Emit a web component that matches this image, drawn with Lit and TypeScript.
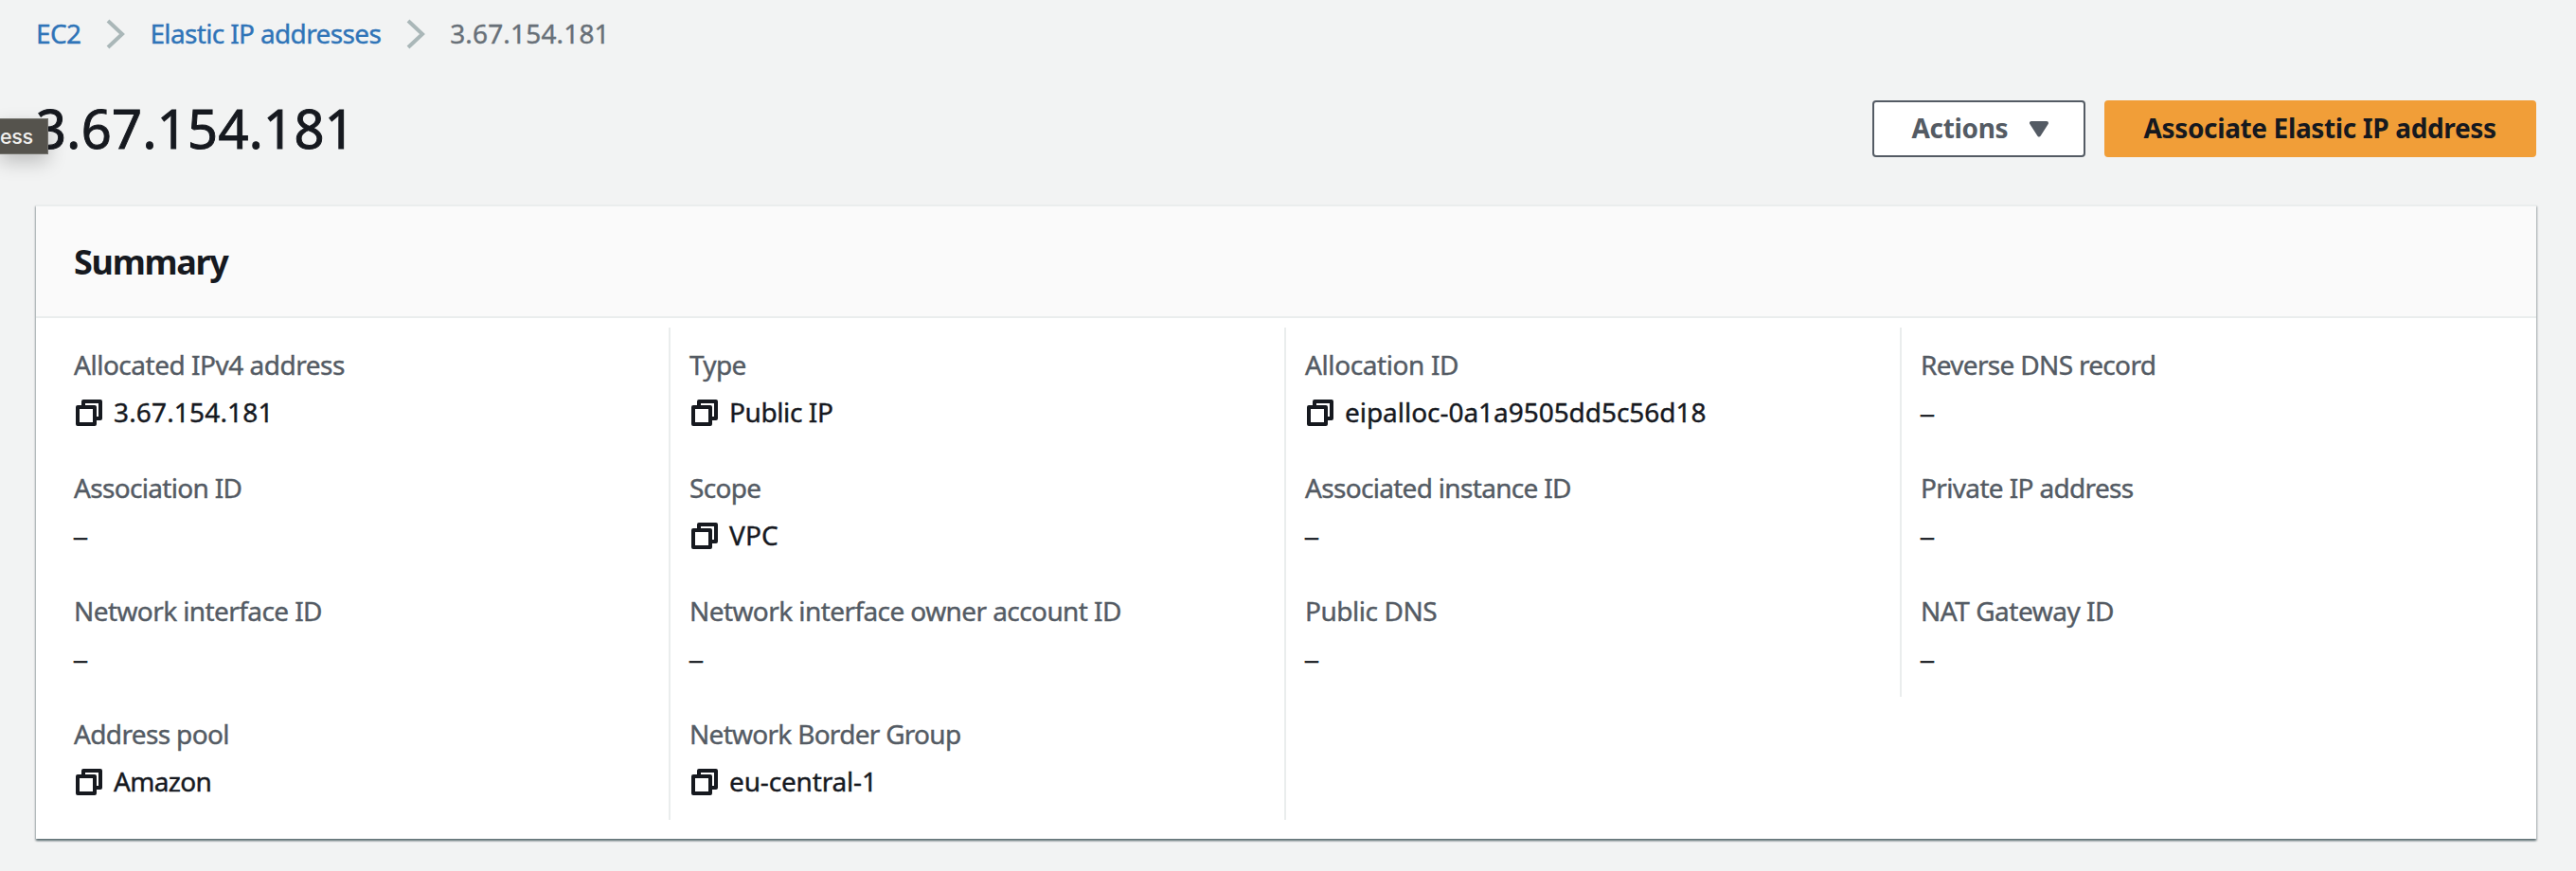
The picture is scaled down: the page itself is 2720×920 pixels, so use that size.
import { LitElement, html, svg, css, nothing } from "lit";

interface Field {
  label: string;
  labelTrack: number;
  value?: string;
  valueTrack?: number;
}

const fields: (Field | null)[] = [
  { label: "Allocated IPv4 address", labelTrack: -0.483, value: "3.67.154.181", valueTrack: 0.16 },
  { label: "Type", labelTrack: -0.669, value: "Public IP", valueTrack: -0.4 },
  { label: "Allocation ID", labelTrack: -0.398, value: "eipalloc-0a1a9505dd5c56d18", valueTrack: -0.04 },
  { label: "Reverse DNS record", labelTrack: -0.68 },
  { label: "Association ID", labelTrack: -0.68 },
  { label: "Scope", labelTrack: -0.7, value: "VPC", valueTrack: 0.13 },
  { label: "Associated instance ID", labelTrack: -0.69 },
  { label: "Private IP address", labelTrack: -0.65 },
  { label: "Network interface ID", labelTrack: -0.59 },
  { label: "Network interface owner account ID", labelTrack: -0.58 },
  { label: "Public DNS", labelTrack: -0.46 },
  { label: "NAT Gateway ID", labelTrack: -0.48 },
  { label: "Address pool", labelTrack: -0.64, value: "Amazon", valueTrack: -0.7 },
  { label: "Network Border Group", labelTrack: -0.72, value: "eu-central-1", valueTrack: -0.16 },
  null,
];

const chevron = html`<svg class="chevron" width="20" height="32" viewBox="0 0 20 32">
  ${svg`<path d="M2 2 L17 16 L2 30" fill="none" stroke="#aab7b8" stroke-width="4" />`}
</svg>`;

const copyIcon = html`<svg class="copy" width="28" height="28" viewBox="0 0 28 28">
  ${svg`<path d="M8 6 V2 H26 V20 H22" fill="none" stroke="#16191f" stroke-width="4" stroke-linejoin="round" />
  <rect x="2" y="8" width="18" height="18" fill="none" stroke="#16191f" stroke-width="4" stroke-linejoin="round" />`}
</svg>`;

class SummaryField extends LitElement {
  static properties = { field: { attribute: false } };
  declare field: Field | null;

  static styles = css`
    :host {
      display: block;
      box-sizing: border-box;
      padding: 17px 0 0 20px;
      line-height: 44px;
      -webkit-text-stroke-width: 0.4px;
    }
    .label {
      color: #545b64;
      white-space: nowrap;
    }
    .value {
      display: flex;
      align-items: center;
      margin-top: 6px;
      height: 44px;
      color: #16191f;
      white-space: nowrap;
    }
    .copy {
      display: block;
      margin: 2px 12px 0 2px;
    }
    .dash {
      padding-top: 3px;
      font-family: "Liberation Sans", sans-serif;
      font-size: 25px;
      -webkit-text-stroke-width: 0.7px;
    }
  `;

  render() {
    const f = this.field;
    if (!f) return nothing;
    return html`
      <div class="label" style="letter-spacing:${f.labelTrack}px">${f.label}</div>
      <div class="value">
        ${f.value
          ? html`${copyIcon}<span style="letter-spacing:${f.valueTrack}px">${f.value}</span>`
          : html`<span class="dash">–</span>`}
      </div>
    `;
  }
}
customElements.define("summary-field", SummaryField);

class AppRoot extends LitElement {
  static styles = css`
    :host {
      display: block;
      position: relative;
      box-sizing: border-box;
      width: 100%;
      height: 920px;
      padding: 13px 42px 0 38px;
      overflow: hidden;
      background: #f2f3f3;
      color: #16191f;
      font: 400 28px/44px "Noto Sans", sans-serif;
    }
    .breadcrumbs {
      display: flex;
      align-items: center;
      height: 46px;
      line-height: 46px;
      margin-top: -1px;
      white-space: nowrap;
      -webkit-text-stroke-width: 0.4px;
    }
    .breadcrumbs a {
      color: #2f74b8;
    }
    .chevron {
      display: block;
      margin: 2px 26.5px 0;
    }
    .crumb-root {
      letter-spacing: -0.632px;
    }
    .crumb-parent {
      letter-spacing: -0.644px;
    }
    .crumb-current {
      color: #687078;
      letter-spacing: 0.16px;
    }
    .heading {
      display: flex;
      align-items: flex-start;
      justify-content: space-between;
      margin-top: 48px;
      height: 110px;
    }
    h1 {
      margin: 0;
      padding-top: 1px;
      font-size: 56px;
      font-weight: 400;
      line-height: 56px;
      letter-spacing: 0.32px;
      -webkit-text-stroke-width: 1px;
    }
    .actions {
      display: flex;
      gap: 20px;
    }
    .button {
      display: flex;
      align-items: center;
      box-sizing: border-box;
      height: 60px;
      border: 2px solid #545b64;
      border-radius: 4px;
      background: #fff;
      color: #545b64;
      padding: 0 0 2px 39.5px;
      font-weight: 700;
      letter-spacing: -0.341px;
      white-space: nowrap;
    }
    .menu {
      width: 225px;
    }
    .caret {
      display: block;
      flex: none;
      margin: 2px 0 0 23px;
    }
    .primary {
      width: 456px;
      border-color: #f19e38;
      background: #f19e38;
      color: #16191f;
      letter-spacing: -0.362px;
    }
    .card {
      box-sizing: border-box;
      height: 670px;
      background: #fff;
      box-shadow: 0 2px 2px 0 rgba(0, 28, 36, 0.4), 1px 2px 2px 0 rgba(0, 28, 36, 0.2),
        -1px 2px 2px 0 rgba(0, 28, 36, 0.2);
    }
    .card-header {
      box-sizing: border-box;
      height: 120px;
      padding-left: 40px;
      border-top: 2px solid #eaeded;
      border-bottom: 2px solid #eaeded;
      background: #fafafa;
    }
    h2 {
      margin: 0;
      font-size: 36px;
      font-weight: 700;
      line-height: 118px;
      letter-spacing: -1.3px;
    }
    .grid {
      display: grid;
      grid-template-columns: 668px 650px 650px 1fr;
      grid-auto-rows: 130px;
      padding-top: 10px;
    }
    summary-field {
      border-left: 2px solid #eaeded;
    }
    summary-field:nth-child(4n + 1) {
      border-left: 0;
      padding-left: 40px;
    }
    .tooltip {
      position: absolute;
      left: 0;
      top: 125px;
      box-sizing: border-box;
      width: 51px;
      height: 38px;
      border: 1px solid #73726d;
      border-left: 0;
      background: #55534d;
      color: #f1f0ee;
      box-shadow: 0 8px 20px rgba(0, 0, 0, 0.22);
      font: 500 21.5px/37px Inter, "Liberation Sans", sans-serif;
      letter-spacing: -0.4px;
    }
  `;

  render() {
    return html`
      <nav class="breadcrumbs">
        <a class="crumb-root">EC2</a>${chevron}
        <a class="crumb-parent">Elastic IP addresses</a>${chevron}
        <span class="crumb-current">3.67.154.181</span>
      </nav>
      <header class="heading">
        <h1>3.67.154.181</h1>
        <div class="actions">
          <div class="button menu">
            Actions
            <svg class="caret" width="20" height="17" viewBox="0 0 20 17">
              ${svg`<path d="M2 2 H18 L10 14.5 Z" fill="#545b64" stroke="#545b64" stroke-width="4" stroke-linejoin="round" />`}
            </svg>
          </div>
          <div class="button primary">Associate Elastic IP address</div>
        </div>
      </header>
      <section class="card">
        <div class="card-header"><h2>Summary</h2></div>
        <div class="grid">${fields.map((f) => html`<summary-field .field=${f}></summary-field>`)}</div>
      </section>
      <div class="tooltip">ess</div>
    `;
  }
}
customElements.define("app-root", AppRoot);
